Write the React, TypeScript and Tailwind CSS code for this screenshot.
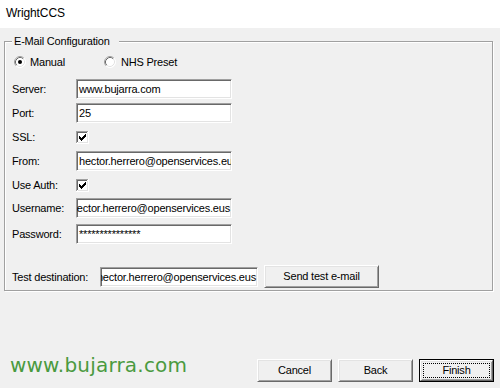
import React from 'react';

const sunken =
  'bg-white border border-t-[#a0a0a0] border-l-[#a0a0a0] border-r-white border-b-white shadow-[inset_1px_1px_0_#696969,inset_-1px_-1px_0_#e3e3e3]';

const TextBox = ({ value, width, end = false }: { value: string; width: number; end?: boolean }) => (
  <div
    className={`flex h-[20px] items-center overflow-hidden whitespace-nowrap ${sunken} ${end ? 'justify-end pr-[1px]' : 'pl-[2px]'}`}
    style={{ width }}
  >
    <span className="shrink-0">{value}</span>
  </div>
);

const CheckBox = () => (
  <svg width="13" height="13" viewBox="0 0 13 13" shapeRendering="crispEdges">
    <rect x="0" y="0" width="13" height="13" fill="#fff" />
    <path d="M0.5 12 V0.5 H12" stroke="#a0a0a0" fill="none" />
    <path d="M1.5 11 V1.5 H11" stroke="#696969" fill="none" />
    <path d="M1.5 11.5 H11.5 V1.5" stroke="#e3e3e3" fill="none" />
    {[5, 6, 7, 6, 5, 4, 3].map((y, i) => (
      <rect key={i} x={3 + i} y={y} width="1" height="3" fill="#000" />
    ))}
  </svg>
);

const Radio = ({ checked }: { checked?: boolean }) => (
  <svg width="12" height="12" viewBox="0 0 12 12">
    <circle cx="6" cy="6" r="5.5" fill="#fff" />
    <path d="M2.11 9.89 A5.5 5.5 0 0 1 9.89 2.11" stroke="#a0a0a0" fill="none" />
    <path d="M9.89 2.11 A5.5 5.5 0 0 1 2.11 9.89" stroke="#fff" fill="none" />
    <path d="M2.82 9.18 A4.5 4.5 0 0 1 9.18 2.82" stroke="#696969" fill="none" />
    <path d="M9.18 2.82 A4.5 4.5 0 0 1 2.82 9.18" stroke="#e3e3e3" fill="none" />
    {checked && <circle cx="6" cy="6" r="2" fill="#000" />}
  </svg>
);

const Button = ({ label, width, isDefault = false }: { label: string; width: number; isDefault?: boolean }) => (
  <div className={`h-[23px] ${isDefault ? 'border border-black' : ''}`} style={{ width }}>
    <div className="relative flex h-full w-full items-center justify-center border border-t-white border-l-white border-r-[#696969] border-b-[#696969] bg-[#f0f0f0] shadow-[inset_1px_1px_0_#e3e3e3,inset_-1px_-1px_0_#a0a0a0]">
      {isDefault && <div className="absolute inset-[2px] border border-dotted border-black" />}
      <span className="relative">{label}</span>
    </div>
  </div>
);

const Row = ({ label, children, className = '' }: { label: string; children: React.ReactNode; className?: string }) => (
  <div className={`flex h-[20px] items-center ${className}`}>
    <div className="w-[64px]">{label}</div>
    {children}
  </div>
);

export default function App() {
  return (
    <div className="flex h-[388px] w-[500px] flex-col bg-[#f0f0f0] font-['Liberation_Sans',Arial,sans-serif] text-[11px] leading-[13px] tracking-[-0.2px] text-black">
      {/* Title bar */}
      <div className="h-[28px] bg-white pl-[6px] pt-[6px] text-[12px] leading-[14px] tracking-[-0.1px]">WrightCCS</div>

      <fieldset className="ml-[4px] mt-[7px] w-[489px] border border-[#a0a0a0] pb-[3px] pl-[7px] pt-[6px] shadow-[inset_1px_1px_0_#fff,1px_1px_0_#fff]">
        <legend className="bg-[#f0f0f0] pl-[2px] pr-[9px] leading-[13px]">E-Mail Configuration</legend>

        <div className="flex h-[16px] items-center pl-[2px]">
          <div className="flex w-[90px] items-center gap-[4px]">
            <Radio checked />
            <span>Manual</span>
          </div>
          <div className="flex items-center gap-[5px]">
            <Radio />
            <span>NHS Preset</span>
          </div>
        </div>

        <Row label="Server:" className="mt-[9px]">
          <TextBox value="www.bujarra.com" width={156} />
        </Row>
        <Row label="Port:" className="mt-[4px]">
          <TextBox value="25" width={156} />
        </Row>
        <Row label="SSL:" className="mt-[4px]">
          <CheckBox />
        </Row>
        <Row label="From:" className="mt-[4px]">
          <TextBox value="hector.herrero@openservices.eus" width={156} />
        </Row>
        <Row label="Use Auth:" className="mt-[4px]">
          <CheckBox />
        </Row>
        <Row label="Username:" className="mt-[3px]">
          <TextBox value="hector.herrero@openservices.eus" width={156} end />
        </Row>
        <Row label="Password:" className="mt-[6px]">
          <TextBox value="***************" width={156} />
        </Row>

        <div className="mt-[21px] flex h-[22px] items-start">
          <div className="flex h-[22px] w-[88px] items-center pt-[2px]">Test destination:</div>
          <div className="mt-[2px]">
            <TextBox value="hector.herrero@openservices.eus" width={158} end />
          </div>
          <div className="ml-[6px]">
            <Button label="Send test e-mail" width={115} />
          </div>
        </div>
      </fieldset>

      <div className="flex-1" />

      <div className="flex items-end pb-[6px] pl-[10px] pr-[6px]">
        <div className="mb-[5px] font-['DejaVu_Sans',Verdana,sans-serif] text-[20px] leading-[24px] tracking-[0.2px] text-[#4a9a3f]">
          www.bujarra.com
        </div>
        <div className="ml-auto flex gap-[6px]">
          <Button label="Cancel" width={75} />
          <Button label="Back" width={75} />
          <Button label="Finish" width={75} isDefault />
        </div>
      </div>
    </div>
  );
}
